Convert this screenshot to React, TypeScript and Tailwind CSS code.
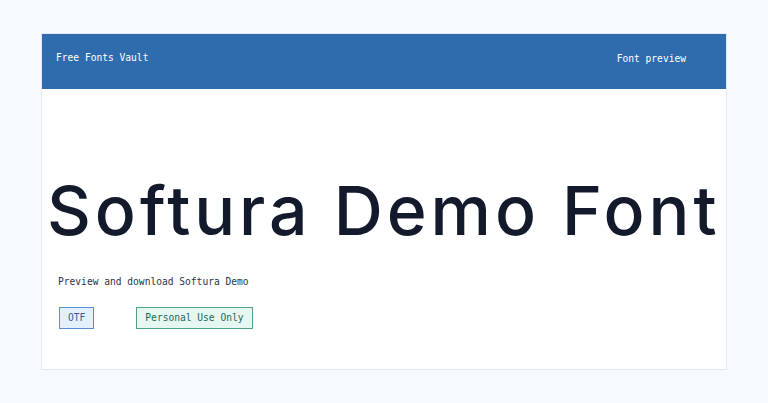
import React from "react";

const mono = { fontFamily: '"DejaVu Sans Mono", "Liberation Mono", monospace' };

export default function App() {
  return (
    <div className="min-h-screen w-full bg-[#f6f9fd] pt-[33px] px-[41px]">
      <div className="w-[686px] h-[337px] bg-white border border-[#e3e9f1] flex flex-col">
        {/* header */}
        <div className="h-[55px] bg-[#2f6cad] flex items-center justify-between pl-[14px] pr-[40px] text-white text-[9.6px]" style={mono}>
          <span className="-mt-[7px]">Free Fonts Vault</span>
          <span className="-mt-[5px]">Font preview</span>
        </div>

        {/* body */}
        <div className="flex flex-col pl-[5px] pt-[87px]">
          <h1
            className="text-[#121a2b] text-[68px] leading-[68px] font-medium tracking-[0.058em] whitespace-nowrap"
            style={{ fontFamily: 'Inter, "Noto Sans", sans-serif' }}
          >
            Softura Demo Font
          </h1>
          <p className="mt-[31px] ml-[11px] text-[#2a3345] text-[9.6px]" style={mono}>
            Preview and download Softura Demo
          </p>
          <div className="mt-[18px] ml-[12px] flex items-center gap-[42px] text-[9.6px]" style={mono}>
            <span className="h-[22px] px-[8px] flex items-center bg-[#e5f0fd] border border-[#5b8fd3] text-[#2a5d9c]">OTF</span>
            <span className="h-[22px] px-[8px] flex items-center bg-[#e6f7f1] border border-[#4f9f87] text-[#196b55]">Personal Use Only</span>
          </div>
        </div>
      </div>
    </div>
  );
}
